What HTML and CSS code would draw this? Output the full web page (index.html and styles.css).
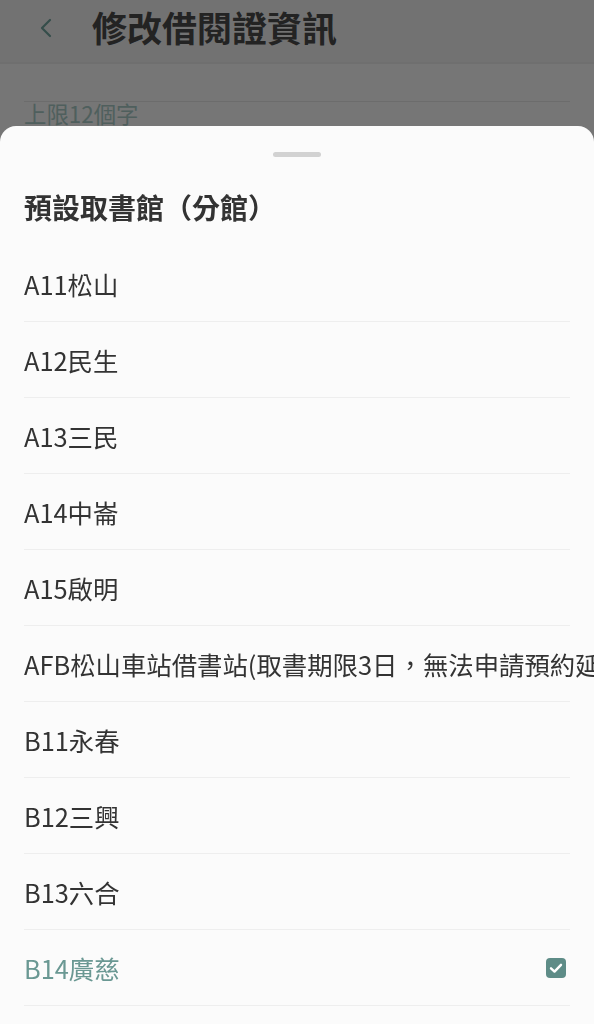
FILE: index.html
```html
<!DOCTYPE html>
<html lang="zh-Hant">
<head>
<meta charset="utf-8">
<title>修改借閱證資訊</title>
<link rel="stylesheet" href="styles.css">
</head>
<body>
<div class="page">
  <header class="appbar">
    <span class="back">
      <svg width="16" height="22" viewBox="0 0 16 22"><path d="M12 3 L4 11 L12 19" fill="none" stroke="currentColor" stroke-width="2.2" stroke-linecap="round" stroke-linejoin="round"/></svg>
    </span>
    <h1 class="appbar-title">修改借閱證資訊</h1>
  </header>
  <div class="field">
    <div class="field-line"></div>
    <div class="field-hint">上限12個字</div>
  </div>
</div>

<div class="scrim"></div>

<section class="sheet">
  <div class="handle"></div>
  <h2 class="sheet-title">預設取書館（分館）</h2>
  <ul class="options">
    <li class="option"><span class="label">A11松山</span></li>
    <li class="option"><span class="label">A12民生</span></li>
    <li class="option"><span class="label">A13三民</span></li>
    <li class="option"><span class="label">A14中崙</span></li>
    <li class="option"><span class="label">A15啟明</span></li>
    <li class="option"><span class="label">AFB松山車站借書站(取書期限3日，無法申請預約延期)</span></li>
    <li class="option"><span class="label">B11永春</span></li>
    <li class="option"><span class="label">B12三興</span></li>
    <li class="option"><span class="label">B13六合</span></li>
    <li class="option selected"><span class="label">B14廣慈</span>
      <svg class="check" width="20" height="20" viewBox="0 0 20 20"><rect x="0" y="0" width="20" height="20" rx="4" fill="#5e8c87"/><path d="M5 10.3 L8.5 13.6 L15 6.8" fill="none" stroke="#fff" stroke-width="2.4" stroke-linecap="round" stroke-linejoin="round"/></svg>
    </li>
  </ul>
</section>
</body>
</html>
```

FILE: styles.css
```css
html, body {
  margin: 0;
  padding: 0;
  height: 100%;
  overflow: hidden;
}
body {
  background: #ececec;
  font-family: "Noto Sans CJK TC", "Noto Sans", sans-serif;
  color: #333;
}
.page {
  height: 100%;
}
.appbar {
  height: 64px;
  display: flex;
  align-items: center;
  background: #e4e4e4;
  border-bottom: 2px solid #dedede;
  box-sizing: border-box;
}
.back {
  color: #6a9a95;
  margin-left: 38px;
  margin-top: -6px;
  display: flex;
}
.appbar-title {
  margin: -10px 0 0 38px;
  font-size: 35px;
  font-weight: 700;
  color: #474747;
  line-height: 1;
}
.field {
  padding: 0 24px;
}
.field-line {
  margin-top: 37px;
  height: 1px;
  background: #d8d8d8;
}
.field-hint {
  margin-top: 0;
  font-size: 22.4px;
  line-height: 20px;
  padding-top: 1px;
  color: #9ebfbb;
}
.scrim {
  position: fixed;
  inset: 0;
  background: rgba(0, 0, 0, 0.5);
}
.sheet {
  position: fixed;
  left: 0;
  right: 0;
  top: 126px;
  bottom: 0;
  background: #fbfbfb;
  border-radius: 16px 16px 0 0;
  padding-top: 26px;
  overflow: hidden;
}
.handle {
  width: 48px;
  height: 5px;
  border-radius: 3px;
  background: #d2d2d2;
  margin: 0 auto;
}
.sheet-title {
  margin: 31px 24px 20px;
  font-size: 28px;
  line-height: 38px;
  font-weight: 700;
  color: #333;
}
.options {
  list-style: none;
  margin: 0;
  padding: 0;
}
.option {
  margin: 0 24px;
  height: 75px;
  border-bottom: 1px solid #eeeeee;
  display: flex;
  align-items: center;
  justify-content: space-between;
  font-size: 25.4px;
  color: #333;
  white-space: nowrap;
}
.option.selected {
  color: #6a9893;
}
.check {
  margin-right: 4px;
  flex: none;
}
```
